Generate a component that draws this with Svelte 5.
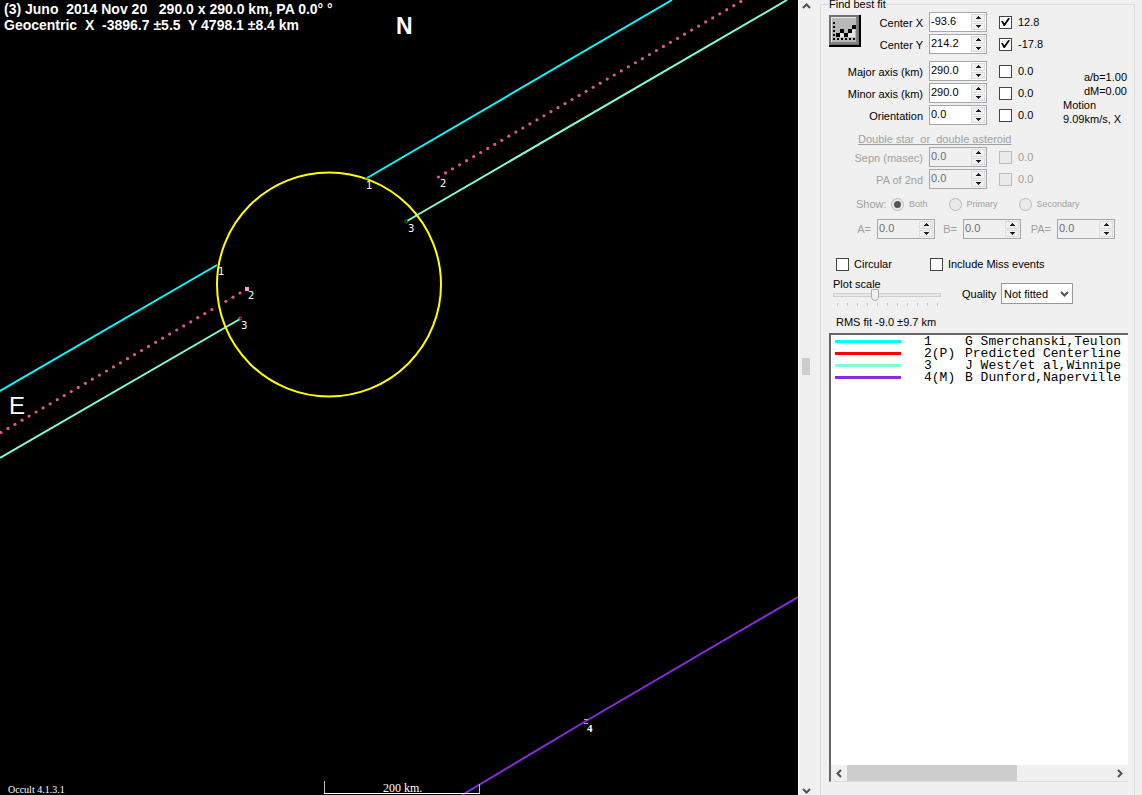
<script>
  const axes = [
    { id: 'cx', label: 'Center X', value: '-93.6', on: true, delta: '12.8' },
    { id: 'cy', label: 'Center Y', value: '214.2', on: true, delta: '-17.8' },
    { id: 'major', label: 'Major axis (km)', value: '290.0', on: false, delta: '0.0', gap: true },
    { id: 'minor', label: 'Minor axis (km)', value: '290.0', on: false, delta: '0.0' },
    { id: 'orient', label: 'Orientation', value: '0.0', on: false, delta: '0.0' }
  ];
  const pair = [
    { id: 'sepn', label: 'Sepn (masec)', value: '0.0', on: false, delta: '0.0' },
    { id: 'pa2', label: 'PA of 2nd', value: '0.0', on: false, delta: '0.0' }
  ];
  const offsets = [
    { id: 'offA', label: 'A=' },
    { id: 'offB', label: 'B=' },
    { id: 'offPA', label: 'PA=' }
  ];
  const shows = ['Both', 'Primary', 'Secondary'];
  const observers = [
    { color: '#00ffff', id: '1', name: 'G Smerchanski,Teulon' },
    { color: '#ff0000', id: '2(P)', name: 'Predicted Centerline' },
    { color: '#7fffd4', id: '3', name: 'J West/et al,Winnipe' },
    { color: '#8a2be2', id: '4(M)', name: 'B Dunford,Naperville' }
  ];
  const ticks = Array.from({ length: 11 });

  // Predicted centreline, drawn as evenly spaced dots on either side of the profile
  const upper = Array.from({ length: 44 }, (_, i) => [438.5 + i * 7.03, 177 - i * 4.08]);
  const lower = Array.from({ length: 36 }, (_, i) => [247 - i * 7.03, 289 + i * 4.1]).filter((_, i) => i !== 0 && i !== 4);
</script>

{#snippet spin(id, value, disabled)}
  <span class="spin" class:off={disabled}>
    <input {id} type="text" {value} {disabled} />
    <span class="arrows">
      <button type="button" aria-label="Increase" {disabled}>
        <svg viewBox="0 0 5 3"><path d="M2 0h1v1h1v1h1v1H0V2h1V1h1z" /></svg>
      </button>
      <button type="button" aria-label="Decrease" {disabled}>
        <svg viewBox="0 0 5 3"><path d="M0 0h5v1H4v1H3v1H2V2H1V1H0z" /></svg>
      </button>
    </span>
  </span>
{/snippet}

{#snippet row(f, disabled)}
  <div class="row" class:gap={f.gap} class:dim={disabled}>
    <label class="name" for={f.id}>{f.label}</label>
    {@render spin(f.id, f.value, disabled)}
    <label class="check"><input type="checkbox" checked={f.on} {disabled} />{f.delta}</label>
  </div>
{/snippet}

<main>
  <section class="plot">
    <svg viewBox="0 0 798 795" preserveAspectRatio="xMinYMin slice">
      <g fill="none" stroke-width="2">
        <path d="M672 0L367 178M0 391L217 265" stroke="#00ffff" />
        <path d="M787 0L407 221M0 458L240 319" stroke="#7fffd4" />
        <path d="M798 597L586 721L462 795" stroke="#8a2be2" />
        <circle cx="329" cy="284.5" r="112" stroke="#ffff00" />
      </g>
      <g fill="#e0559c">
        {#each [...upper, ...lower] as [x, y]}
          <circle cx={x} cy={y} r="1.6" />
        {/each}
      </g>
      <rect x="245" y="287" width="4" height="4" fill="#f0a8d8" />
      <g fill="none" stroke-width="1">
        <circle cx="406.5" cy="221.5" r="1.5" stroke="#00a000" />
        <circle cx="240" cy="318.5" r="1.5" stroke="#d05030" />
        <path d="M365 179h3" stroke="#00a000" />
        <path d="M216 265h2" stroke="#d05030" />
        <path d="M584 719.5h4M584 723.5h4" stroke="#b0a0c0" />
        <path d="M324.5 781V793M479.5 784V793" stroke="#c0c0c0" />
        <path d="M324 793.5H480" stroke="#fff" />
      </g>
      <g class="title">
        <text x="4" y="14">(3) Juno  2014 Nov 20   290.0 x 290.0 km, PA 0.0° °</text>
        <text x="4" y="30">Geocentric  X  -3896.7 ±5.5  Y 4798.1 ±8.4 km</text>
      </g>
      <text class="north" x="396" y="34">N</text>
      <text class="east" x="9" y="414">E</text>
      <g class="mark">
        <text x="366" y="189">1</text>
        <text x="440" y="187">2</text>
        <text x="408" y="232">3</text>
        <text x="218" y="275">1</text>
        <text x="248" y="299">2</text>
        <text x="241" y="329">3</text>
      </g>
      <text class="mark-serif" x="587" y="732">4</text>
      <text class="scale" x="383" y="792">200 km.</text>
      <text class="version" x="8" y="793">Occult 4.1.3.1</text>
    </svg>
  </section>

  <div class="vscroll">
    <button type="button" aria-label="Scroll up">
      <svg width="9" height="6" viewBox="0 0 9 6"><path d="M1 5L4.5 1.5L8 5" /></svg>
    </button>
    <span class="grip"></span>
    <button type="button" aria-label="Scroll down">
      <svg width="9" height="6" viewBox="0 0 9 6"><path d="M1 1L4.5 4.5L8 1" /></svg>
    </button>
  </div>

  <form class="panel">
    <fieldset class="group">
      <legend>Find best fit</legend>

      <div class="fit">
        <button class="plot-btn" type="button" aria-label="Plot">
          <svg width="32" height="32" viewBox="0 0 32 32">
            <path d="M0 0h32v32H0z" fill="#000" />
            <path d="M0 0h30v30H0z" fill="#707070" />
            <path d="M2 2h27v27H2z" fill="#808080" />
            <path d="M2 2h25v25H2z" fill="#e8e8e8" />
            <path d="M3 3h24v24H3z" fill="#b8b8b8" />
            <path d="M8 22L12 17L17 21L21 17L26 12V22z" fill="#e4e4e4" />
            <path d="M8 20L12 16L17 20L25 12" fill="none" stroke="#888" />
            <path d="M4 7h2v2H4zM4 11h2v2H4zM4 15h2v2H4zM4 19h2v2H4zM4 23h2v2H4zM8 23h2v2H8zM12 23h2v2h-2zM16 23h2v2h-2zM20 23h2v2h-2zM24 23h2v2h-2z" />
            <path d="M7 18h4v4H7zM11 14h4v4h-4zM15 18h4v4h-4zM19 14h4v4h-4zM23 10h4v4h-4z" />
          </svg>
        </button>
        <div class="rows">
          {#each axes as f}{@render row(f, false)}{/each}
        </div>
        <div class="readout">
          <span class="end">a/b=1.00</span>
          <span class="end">dM=0.00</span>
          <span class="motion">Motion</span>
          <span class="motion">9.09km/s, X</span>
        </div>
      </div>

      <div class="double">
        <span class="heading">Double star&nbsp; or&nbsp; double asteroid</span>
        <div class="rows">
          {#each pair as f}{@render row(f, true)}{/each}
        </div>
        <div class="show">
          <span class="show-name">Show:</span>
          {#each shows as s, i}
            <label><input type="radio" name="show" checked={i === 0} disabled />{s}</label>
          {/each}
        </div>
        <div class="offsets">
          {#each offsets as o}
            <label for={o.id}>{o.label}</label>
            {@render spin(o.id, '0.0', true)}
          {/each}
        </div>
      </div>

      <div class="options">
        <label class="check"><input type="checkbox" />Circular</label>
        <label class="check"><input type="checkbox" />Include Miss events</label>
      </div>

      <div class="tuning">
        <div class="zoom">
          <label for="plotscale">Plot scale</label>
          <input id="plotscale" type="range" min="0" max="10" step="0.1" value="3.8" />
          <div class="ticks">{#each ticks as _}<i></i>{/each}</div>
        </div>
        <label for="quality">Quality</label>
        <div class="select">
          <select id="quality"><option>Not fitted</option></select>
          <svg width="9" height="6" viewBox="0 0 9 6"><path d="M1 1L4.5 4.5L8 1" /></svg>
        </div>
      </div>

      <div class="rms">RMS fit -9.0 ±9.7 km</div>

      <div class="list">
        <ul>
          {#each observers as o}
            <li>
              <span class="swatch" style="background:{o.color}"></span>
              <span>{o.id}</span>
              <span class="who">{o.name}</span>
            </li>
          {/each}
        </ul>
        <div class="hscroll">
          <button type="button" aria-label="Scroll left">
            <svg width="6" height="9" viewBox="0 0 6 9"><path d="M5 1L1.5 4.5L5 8" /></svg>
          </button>
          <span class="track"><span class="thumb"></span></span>
          <button type="button" aria-label="Scroll right">
            <svg width="6" height="9" viewBox="0 0 6 9"><path d="M1 1L4.5 4.5L1 8" /></svg>
          </button>
        </div>
      </div>
    </fieldset>
  </form>
</main>

<style>
  :global(body) { background: #f0f0f0; }
  main {
    display: flex;
    height: 100vh;
    min-height: 600px;
    overflow: hidden;
    background: #f0f0f0;
    color: #000;
    font: 11px/14px "Liberation Sans", Arial, sans-serif;
  }
  main *, main *::before { box-sizing: border-box; }
  button { padding: 0; margin: 0; border: 0; background: none; display: flex; align-items: center; justify-content: center; }
  input { margin: 0; font: inherit; }

  .plot { flex: 1; min-width: 0; background: #000; }
  .plot svg { display: block; width: 100%; height: 100%; }
  .plot text { fill: #fff; white-space: pre; }
  .title { font: bold 14px "Liberation Sans", Arial, sans-serif; }
  .north { font: bold 23px "Liberation Sans", Arial, sans-serif; }
  .east { font: 24px "Liberation Sans", Arial, sans-serif; }
  .mark { font: 10px "DejaVu Sans", Verdana, sans-serif; }
  .mark-serif { font: bold 11px "Liberation Serif", serif; }
  .scale { font: 12px "Liberation Serif", serif; }
  .version { font: 10px "Liberation Serif", serif; }

  .vscroll {
    flex: 0 0 22px;
    display: flex;
    flex-direction: column;
    justify-content: space-between;
    padding: 3px 9px 1px 3px;
    border-left: 1px solid #fff;
  }
  .vscroll button { height: 6px; }
  .grip { width: 8px; height: 17px; background: #cdcdcd; margin-top: -64px; }
  .vscroll svg path, .hscroll svg path, .select svg path { fill: none; stroke: #505050; stroke-width: 2; }

  .panel { flex: 0 0 322px; display: flex; padding-right: 7px; margin: -3px 0 -2px; }
  .group {
    flex: 1;
    min-width: 0;
    margin: 0;
    padding: 0 6px 14px 8px;
    border: 1px solid #dcdcdc;
    display: flex;
    flex-direction: column;
  }
  legend { margin: 0; padding: 0 1px 0 0; line-height: 14px; }

  .fit { display: flex; padding-top: 1px; }
  .plot-btn { flex: none; width: 32px; height: 32px; margin: 3px -32px 0 0; }
  .rows { display: flex; flex-direction: column; gap: 2px; }
  .row { display: grid; grid-template-columns: 94px 58px auto; column-gap: 6px; height: 20px; align-items: center; }
  .row.gap { margin-top: 5px; }
  .name { text-align: right; padding-top: 2px; }
  .row .check { padding-left: 6px; }

  .spin { display: flex; width: 58px; height: 20px; border: 1px solid #a4a8ac; background: #fff; }
  .spin input { flex: 1; min-width: 0; width: 0; border: 0; padding: 0 0 2px 1px; background: none; color: #000; outline: 0; }
  .arrows { flex: 0 0 15px; display: flex; flex-direction: column; gap: 1px; padding: 1px 1px 1px 0; }
  .arrows button { flex: 1; border: 1px solid #dcdcdc; background: #f0f0f0; }
  .arrows svg { width: 5px; height: 3px; fill: #202020; }
  .spin.off { background: #f0f0f0; }
  .spin.off input { color: #6d6d6d; }

  .check { display: flex; align-items: center; gap: 6px; }
  input[type="checkbox"] { appearance: none; flex: none; width: 13px; height: 13px; border: 1px solid #444; background: #fff; display: grid; place-items: center; }
  input[type="checkbox"]:checked::before { content: ""; width: 9px; height: 9px; background: #000; clip-path: polygon(0 40%, 20% 40%, 38% 65%, 80% 5%, 100% 10%, 42% 95%, 30% 95%); }
  input[type="checkbox"]:disabled { border-color: #bcbcbc; background: #eaeaea; }
  input[type="radio"] { appearance: none; flex: none; width: 13px; height: 13px; border: 1px solid #b8b8b8; border-radius: 50%; background: #eaeaea; display: grid; place-items: center; }
  input[type="radio"]:checked::before { content: ""; width: 7px; height: 7px; border-radius: 50%; background: #555; }

  .readout { flex: 1; display: flex; flex-direction: column; padding-top: 58px; white-space: nowrap; }
  .end { text-align: right; padding-right: 1px; height: 14px; }
  .motion { padding-left: 20px; height: 14px; }

  .double { color: #a0a0a0; padding-top: 6px; }
  .heading { display: block; width: max-content; margin: 0 0 1px 29px; height: 14px; text-decoration: underline; }
  .show { display: flex; align-items: center; height: 14px; margin: 8px 0 8px 27px; font-size: 9px; }
  .show-name { font-size: 11px; width: 35px; }
  .show label { display: flex; align-items: center; gap: 5px; margin-right: 21px; }
  .offsets { display: grid; grid-template-columns: 20px 58px 28px 58px 36px 58px; align-items: center; padding-left: 28px; }
  .offsets label { text-align: right; padding-right: 6px; }

  .options { display: flex; gap: 38px; padding: 18px 0 0 7px; height: 32px; }
  .options .check { height: 14px; gap: 5px; }

  .tuning { display: flex; align-items: flex-start; padding: 6px 0 0 4px; height: 38px; }
  .zoom { width: 108px; margin-right: 21px; }
  .zoom label { display: block; height: 12px; }
  .tuning > label { width: 39px; padding-top: 10px; }
  input[type="range"] { appearance: none; display: block; width: 100%; height: 12px; background: none; }
  input[type="range"]::-webkit-slider-runnable-track { height: 4px; border: 1px solid #d0d0d0; background: #e8e8e8; }
  input[type="range"]::-webkit-slider-thumb { appearance: none; width: 8px; height: 12px; margin-top: -5px; border: 1px solid #b0b0b0; border-radius: 0 0 4px 4px; background: #f0f0f0; }
  .ticks { display: flex; justify-content: space-between; padding: 2px 3px 0 4px; }
  .ticks i { width: 1px; height: 3px; background: #c8c8c8; }
  .select { display: grid; align-items: center; margin-top: 6px; }
  .select > * { grid-area: 1 / 1; }
  select { appearance: none; width: 72px; height: 21px; border: 1px solid #999; border-radius: 0; background: #fff; color: #000; font: inherit; padding: 0 2px; }
  .select svg { justify-self: end; margin-right: 4px; pointer-events: none; }

  .rms { padding: 0 0 0 7px; margin: 6px 0 3px; height: 15px; }

  .list { flex: 1; min-height: 0; display: flex; flex-direction: column; background: #fff; border: 1px solid #dcdcdc; border-top: 2px solid #666; border-left: 2px solid #666; border-right: 0; }
  ul { flex: 1; min-height: 0; overflow: hidden; list-style: none; margin: 0; padding: 1px 0 0 4px; font: 13px/12px "Liberation Mono", "Courier New", monospace; }
  li { display: grid; grid-template-columns: 89px 41px 1fr; height: 12px; align-items: center; }
  .swatch { width: 66px; height: 3px; margin-bottom: 2px; }
  .who { white-space: nowrap; }
  .hscroll { display: flex; height: 16px; background: #f0f0f0; }
  .hscroll button { flex: 0 0 16px; }
  .track { flex: 1; display: flex; }
  .thumb { width: 64%; background: #cdcdcd; }
</style>
